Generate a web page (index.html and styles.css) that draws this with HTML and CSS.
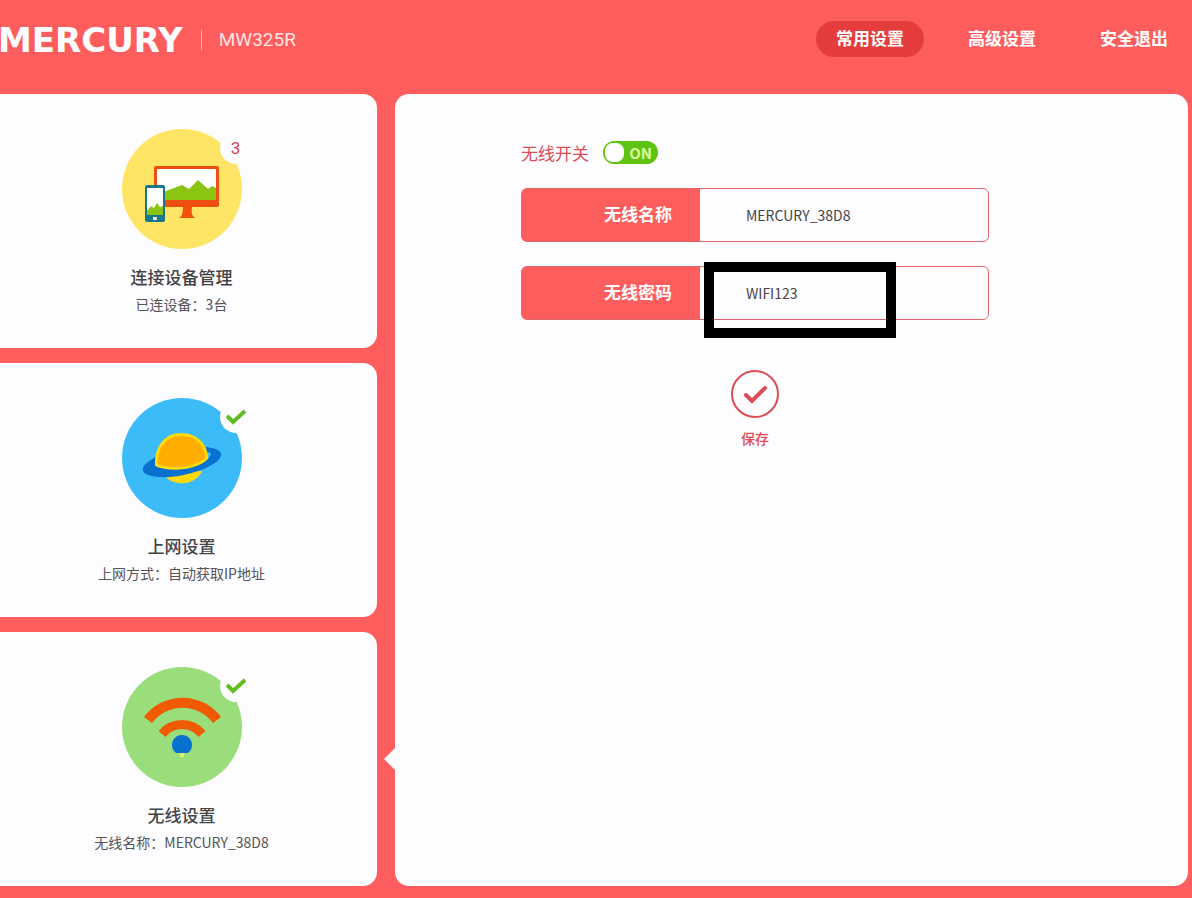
FILE: index.html
```html
<!DOCTYPE html>
<html lang="zh-CN">

<head>
  <meta charset="UTF-8">
  <meta name="viewport" content="width=device-width, initial-scale=1">
  <title>MERCURY MW325R</title>
  <link rel="stylesheet" href="styles.css">
</head>

<body>
  <header class="header">
    <div class="brand">
      <span class="logo">MERCURY</span>
      <span class="model">MW325R</span>
    </div>
    <nav class="nav">
      <a class="nav-link current" href="#">常用设置</a>
      <a class="nav-link" href="#">高级设置</a>
      <a class="nav-link" href="#">安全退出</a>
    </nav>
  </header>

  <div class="container">
    <aside class="sidebar">
      <section class="card">
        <div class="icon">
          <svg width="120" height="120" viewBox="0 0 120 120">
            <circle cx="60" cy="60" r="60" fill="#ffe566"/>
            <rect x="32" y="37" width="65" height="41" rx="2" fill="#ec4f10"/>
            <rect x="35" y="40" width="59" height="31" fill="#fff"/>
            <path d="M35 71V65L44 62L60 56L67 60L76 51L86 60L90 57L94 59V71Z" fill="#8cc412"/>
            <path d="M61 78H70C69 84 70 87 73 89H57C60 87 61 84 61 78Z" fill="#f4520c"/>
            <rect x="23" y="56" width="20" height="37" rx="2" fill="#16768c"/>
            <rect x="25" y="59" width="16" height="27" fill="#fff"/>
            <path d="M25 86V82L29 77L32 79L35 74L38 78L41 77V86Z" fill="#8cc412"/>
            <rect x="31" y="88" width="4" height="3" rx="1" fill="#fff"/>
          </svg>
          <span class="badge">3</span>
        </div>
        <h2 class="card-title">连接设备管理</h2>
        <p class="card-text">已连设备：3台</p>
      </section>

      <section class="card">
        <div class="icon">
          <svg width="120" height="120" viewBox="0 0 120 120">
            <circle cx="60" cy="60" r="60" fill="#3bbcf8"/>
            <path d="M41 75C48 89 73 89 80 73Z" fill="#ffd90a"/>
            <ellipse cx="60" cy="64" rx="40" ry="13" fill="#0870cf" transform="rotate(-12 60 64)"/>
            <path d="M85 54L89 55C88 60 85 62 82 64Z" fill="#3bbcf8"/>
            <path d="M33 68C32 48 43 35 59 35C75 35 86 46 86 61C75 72 48 75 33 68Z" fill="#ffdc0a"/>
            <path d="M36 66C35 49 45 38 59 38C73 38 83 47 83 60C72 69 50 72 36 66Z" fill="#ffae00"/>
          </svg>
          <span class="badge">
            <svg width="20" height="16" viewBox="0 0 20 16">
              <path d="M1 7L7 13L19 2" fill="none" stroke="#62bd22" stroke-width="4"/>
            </svg>
          </span>
        </div>
        <h2 class="card-title">上网设置</h2>
        <p class="card-text">上网方式：自动获取IP地址</p>
      </section>

      <section class="card active">
        <div class="icon">
          <svg width="120" height="120" viewBox="0 0 120 120">
            <circle cx="60" cy="60" r="60" fill="#9ade7b"/>
            <path d="M26 53A43 43 0 0 1 95 53" fill="none" stroke="#f05a05" stroke-width="10"/>
            <path d="M40 67A26 26 0 0 1 80 67" fill="none" stroke="#f05a05" stroke-width="9"/>
            <rect x="58" y="84" width="4" height="6" fill="#dff16a"/>
            <path d="M54 86A10 10 0 1 1 66 86Z" fill="#0873cf"/>
          </svg>
          <span class="badge">
            <svg width="20" height="16" viewBox="0 0 20 16">
              <path d="M1 7L7 13L19 2" fill="none" stroke="#62bd22" stroke-width="4"/>
            </svg>
          </span>
        </div>
        <h2 class="card-title">无线设置</h2>
        <p class="card-text">无线名称：MERCURY_38D8</p>
      </section>
    </aside>

    <main class="panel">
      <form class="wifi-form">
        <div class="switch-row">
          <label for="wifi-on">无线开关</label>
          <div class="switch">
            <input class="switch-input" type="checkbox" id="wifi-on" checked>
            <span class="switch-text">ON</span>
          </div>
        </div>
        <div class="field">
          <label class="field-label" for="ssid">无线名称</label>
          <input class="field-input" type="text" id="ssid" value="MERCURY_38D8">
        </div>
        <div class="field">
          <label class="field-label" for="password">无线密码</label>
          <input class="field-input" type="text" id="password" value="WIFI123">
          <div class="highlight"></div>
        </div>
        <button class="save" type="button">
          <svg width="48" height="48" viewBox="0 0 48 48" fill="none" stroke="#dc4c52">
            <circle cx="24" cy="24" r="23" stroke-width="2"/>
            <path d="M15 25L21 31L34 18" stroke-width="4" stroke-linecap="round"/>
          </svg>
          保存
        </button>
      </form>
    </main>
  </div>
</body>

</html>
```

FILE: styles.css
```css
* {
  box-sizing: border-box;
}

body {
  margin: 0;
  background-color: #fe5d5d;
  color: #444;
  font-family: "Noto Sans CJK SC", sans-serif;
  font-size: 14px;
  overflow-x: hidden;
}

.header {
  display: flex;
  justify-content: space-between;
  height: 94px;
  padding: 21px 4px 0 0;
}

.brand {
  display: flex;
  align-items: center;
  height: 38px;
  margin-left: -2px;
  color: #fff;
}

.logo {
  font-family: "DejaVu Sans", sans-serif;
  font-size: 34px;
  font-weight: bold;
  line-height: 38px;
}

.model {
  margin-left: 18px;
  padding-left: 17px;
  border-left: 1px solid #ffb4b4;
  color: #ffe3e3;
  font-family: Roboto, sans-serif;
  font-size: 19px;
  line-height: 20px;
}

.nav {
  display: flex;
  gap: 24px;
}

.nav-link {
  width: 108px;
  height: 36px;
  border-radius: 18px;
  color: #fff;
  font-size: 17px;
  font-weight: bold;
  line-height: 34px;
  text-align: center;
  text-decoration: none;
}

.nav-link.current {
  background-color: #e53d3d;
}

.container {
  display: grid;
  grid-template-columns: 377px 1fr;
  gap: 18px;
  padding: 0 4px 12px 0;
}

.sidebar {
  display: flex;
  flex-direction: column;
  gap: 15px;
}

.card {
  position: relative;
  display: flex;
  flex-direction: column;
  align-items: center;
  padding: 35px 14px 34px 0;
  border-radius: 0 14px 14px 0;
  background-color: #fdfcff;
}

/* arrow that joins the open card to the panel */
.card.active::after {
  content: "";
  position: absolute;
  top: 50%;
  right: -18px;
  margin-top: -11px;
  border: 11px solid transparent;
  border-left: 0;
  border-right-color: #fdfcff;
}

.icon {
  position: relative;
  height: 120px;
}

.badge {
  position: absolute;
  top: 3px;
  right: -10px;
  display: flex;
  align-items: center;
  justify-content: center;
  width: 32px;
  height: 32px;
  border-radius: 50%;
  background-color: #fdfcff;
  color: #cf4450;
  font-family: Roboto, sans-serif;
  font-size: 17px;
}

.card-title {
  margin: 16px 0 5px;
  font-size: 17px;
  font-weight: 500;
  line-height: 24px;
}

.card-text {
  margin: 0;
  color: #555;
  line-height: 20px;
}

.panel {
  padding: 46px 20px 46px 126px;
  border-radius: 14px;
  background-color: #fdfcff;
}

.wifi-form {
  display: flex;
  flex-direction: column;
  gap: 24px;
  max-width: 468px;
}

.switch-row {
  display: flex;
  align-items: center;
  gap: 14px;
  height: 24px;
  color: #dc4c52;
  font-size: 17px;
}

.switch {
  position: relative;
  width: 55px;
  height: 23px;
}

.switch-input {
  appearance: none;
  width: 100%;
  height: 100%;
  margin: 0;
  border-radius: 12px;
  background-color: #5fc411;
}

.switch-input::before {
  content: "";
  display: block;
  width: 19px;
  height: 19px;
  margin: 2px;
  border-radius: 8px;
  background-color: #fff;
}

.switch-text {
  position: absolute;
  top: 0;
  right: 6px;
  color: #dcff9c;
  font-size: 15px;
  font-weight: bold;
  line-height: 23px;
  pointer-events: none;
}

.field {
  position: relative;
  display: flex;
  height: 54px;
  border: 1px solid #e0686c;
  border-radius: 6px;
}

.field-label {
  width: 178px;
  padding-right: 28px;
  border-radius: 4px 0 0 4px;
  background-color: #fe5d5d;
  color: #fff;
  font-size: 17px;
  font-weight: bold;
  line-height: 50px;
  text-align: right;
}

.field-input {
  flex: 1;
  min-width: 0;
  padding: 0 20px 0 46px;
  border: 0;
  background-color: transparent;
  color: #444;
  font-family: inherit;
  font-size: 14px;
  outline: none;
}

.highlight {
  position: absolute;
  top: -5px;
  left: 182px;
  width: 192px;
  height: 76px;
  border: 10px solid #000;
  pointer-events: none;
}

.save {
  display: flex;
  flex-direction: column;
  align-items: center;
  align-self: center;
  gap: 10px;
  margin-top: 26px;
  padding: 0;
  border: 0;
  background: none;
  color: #dc4c52;
  font-family: inherit;
  font-size: 14px;
  font-weight: 500;
  line-height: 20px;
}
```
